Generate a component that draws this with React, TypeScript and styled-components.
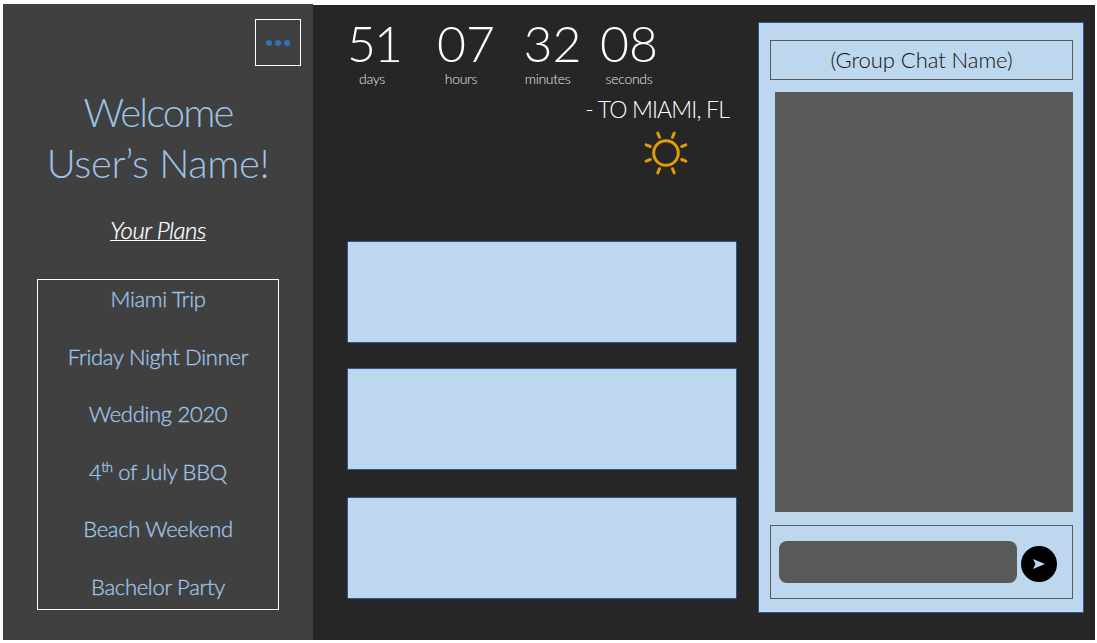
import React from "react";
import styled, { createGlobalStyle } from "styled-components";

const Global = createGlobalStyle`
  html, body { margin: 0; padding: 0; background: #fff; }
  body { font-family: "Lato", "Open Sans", sans-serif; font-weight: 300; }
`;

const Page = styled.div`
  width: 1097px; height: 643px; box-sizing: border-box;
  display: flex; padding: 4px 2px 3px 3px; overflow: hidden; background: #fff;
`;
const Sidebar = styled.aside`
  width: 310px; flex: none; background: #404040;
  display: flex; flex-direction: column; align-items: center;
  box-sizing: border-box; padding: 15px 0 30px;
`;
const MenuRow = styled.div`
  align-self: stretch; display: flex; justify-content: flex-end; padding-right: 12px;
`;
const MenuButton = styled.div`
  width: 46px; height: 47px; box-sizing: border-box; border: 1px solid #fff;
  display: flex; align-items: center; justify-content: center; gap: 3px;
`;
const Dot = styled.span`
  width: 6px; height: 6px; border-radius: 50%; background: #2e75b6;
`;
const Welcome = styled.h1`
  margin: 21px 0 0; font-size: 40px; line-height: 51px; font-weight: 300;
  color: #9dc3e6; text-align: center;
`;
const WelcomeLine = styled.span<{ $spacing: number }>`
  display: block; letter-spacing: ${(p) => p.$spacing}px;
`;
const PlansTitle = styled.div`
  margin-top: 27px; font-size: 24px; line-height: 28px; font-style: italic;
  color: #fff; text-decoration: underline; text-decoration-thickness: 1px; letter-spacing: -0.5px;
  -webkit-text-stroke: 0.25px #fff;
`;
const PlanList = styled.ul`
  list-style: none; margin: 35px 0 0; padding: 5px 0 8px; width: 242px; height: 331px;
  box-sizing: border-box; border: 1px solid #fff;
  display: flex; flex-direction: column; justify-content: space-between; align-items: center;
`;
const Plan = styled.li`
  font-size: 22px; line-height: 28px; color: #9dc3e6; font-weight: 300; letter-spacing: -0.3px;
  -webkit-text-stroke: 0.35px #9dc3e6;
  sup { font-size: 13px; line-height: 0; }
`;
const Main = styled.main`
  flex: 1; margin-top: 1px; background: #262626; display: flex; gap: 21px;
  box-sizing: border-box; padding: 17px 11px 27px 34px;
`;
const Center = styled.section`
  width: 390px; flex: none; display: flex; flex-direction: column; padding-bottom: 14px;
`;
const Countdown = styled.div`
  display: flex; padding-left: 2px; margin-top: -5px;
`;
const Unit = styled.div<{ $w: number; $gap: number }>`
  width: ${(p) => p.$w}px; margin-left: ${(p) => p.$gap}px;
  display: flex; flex-direction: column; align-items: center;
`;
const Digits = styled.div<{ $spacing: number }>`
  font-size: 50px; line-height: 52px; color: #fff; font-weight: 300; white-space: nowrap;
  letter-spacing: ${(p) => p.$spacing}px;
`;
const UnitLabel = styled.div<{ $shift: number }>`
  font-size: 14px; line-height: 18px; color: #e8e8e8; white-space: nowrap; letter-spacing: -0.3px;
  margin-top: 1px; margin-right: ${(p) => p.$shift}px;
`;
const Destination = styled.div`
  margin-top: 7px; padding-right: 8px; text-align: right; color: #fff;
  font-size: 23px; line-height: 28px; letter-spacing: -0.85px;
`;
const SunRow = styled.div`
  display: flex; justify-content: flex-end; padding-right: 47px; margin-top: 6px;
`;
const Cards = styled.div`
  margin-top: auto; display: flex; flex-direction: column;
`;
const Card = styled.div<{ $gap: number }>`
  height: 102px; box-sizing: border-box; background: #bdd7ee; border: 1px solid #2f5597;
  margin-top: ${(p) => p.$gap}px;
`;
const ChatPanel = styled.section`
  width: 326px; flex: none; box-sizing: border-box; background: #bdd7ee;
  border: 1px solid #2f5597; padding: 17px 10px 13px 11px;
  display: flex; flex-direction: column; align-items: stretch;
`;
const ChatName = styled.div`
  height: 40px; box-sizing: border-box; border: 1px solid #595959; padding-bottom: 2px;
  display: flex; align-items: center; justify-content: center;
  font-size: 22px; color: #111; letter-spacing: -0.05px;
`;
const ChatLog = styled.div`
  height: 420px; margin: 12px 0 13px 5px; background: #595959;
`;
const Composer = styled.div`
  height: 74px; box-sizing: border-box; border: 1px solid #595959;
  display: flex; align-items: flex-start; padding: 15px 0 0 8px; gap: 4px;
`;
const MessageInput = styled.div`
  width: 238px; height: 42px; border-radius: 8px; background: #595959;
`;
const SendButton = styled.div`
  width: 36px; height: 36px; margin-top: 5px; border-radius: 50%; background: #000;
  display: flex; align-items: center; justify-content: center;
`;

const rays = [22.5, 67.5, 112.5, 157.5, 202.5, 247.5, 292.5, 337.5];

const Sun = () => (
  <svg width="48" height="48" viewBox="-24 -24 48 48" fill="none" stroke="#e09c00" strokeWidth="3" strokeLinecap="round">
    <circle r="12.3" />
    {rays.map((a) => (
      <line key={a} x1="0" y1="-17" x2="0" y2="-21.5" transform={`rotate(${a})`} />
    ))}
  </svg>
);

const units = [
  { d: "51", l: "days", w: 50, g: 0, s: 4, sp: -2 },
  { d: "07", l: "hours", w: 58, g: 38, s: 10, sp: 0 },
  { d: "32", l: "minutes", w: 55, g: 30, s: 10, sp: 0 },
  { d: "08", l: "seconds", w: 58, g: 20, s: 0, sp: 0 },
];
const cards = [0, 25, 27];

export default function App() {
  return (
    <>
      <Global />
      <Page>
        <Sidebar>
          <MenuRow>
            <MenuButton>
              <Dot /><Dot /><Dot />
            </MenuButton>
          </MenuRow>
          <Welcome>
            <WelcomeLine $spacing={-1.9}>Welcome</WelcomeLine>
            <WelcomeLine $spacing={-0.4}>User’s Name!</WelcomeLine>
          </Welcome>
          <PlansTitle>Your Plans</PlansTitle>
          <PlanList>
            <Plan>Miami Trip</Plan>
            <Plan>Friday Night Dinner</Plan>
            <Plan>Wedding 2020</Plan>
            <Plan>4<sup>th</sup> of July BBQ</Plan>
            <Plan>Beach Weekend</Plan>
            <Plan>Bachelor Party</Plan>
          </PlanList>
        </Sidebar>
        <Main>
          <Center>
            <Countdown>
              {units.map((u) => (
                <Unit key={u.l} $w={u.w} $gap={u.g}>
                  <Digits $spacing={u.sp}>{u.d}</Digits>
                  <UnitLabel $shift={u.s}>{u.l}</UnitLabel>
                </Unit>
              ))}
            </Countdown>
            <Destination>- TO MIAMI, FL</Destination>
            <SunRow><Sun /></SunRow>
            <Cards>
              {cards.map((g, i) => <Card key={i} $gap={g} />)}
            </Cards>
          </Center>
          <ChatPanel>
            <ChatName>(Group Chat Name)</ChatName>
            <ChatLog />
            <Composer>
              <MessageInput />
              <SendButton>
                <svg width="14" height="12" viewBox="0 0 14 12">
                  <path d="M1 1 L13 6 L1 11 L3.5 6 Z" fill="#bdd7ee" />
                </svg>
              </SendButton>
            </Composer>
          </ChatPanel>
        </Main>
      </Page>
    </>
  );
}
